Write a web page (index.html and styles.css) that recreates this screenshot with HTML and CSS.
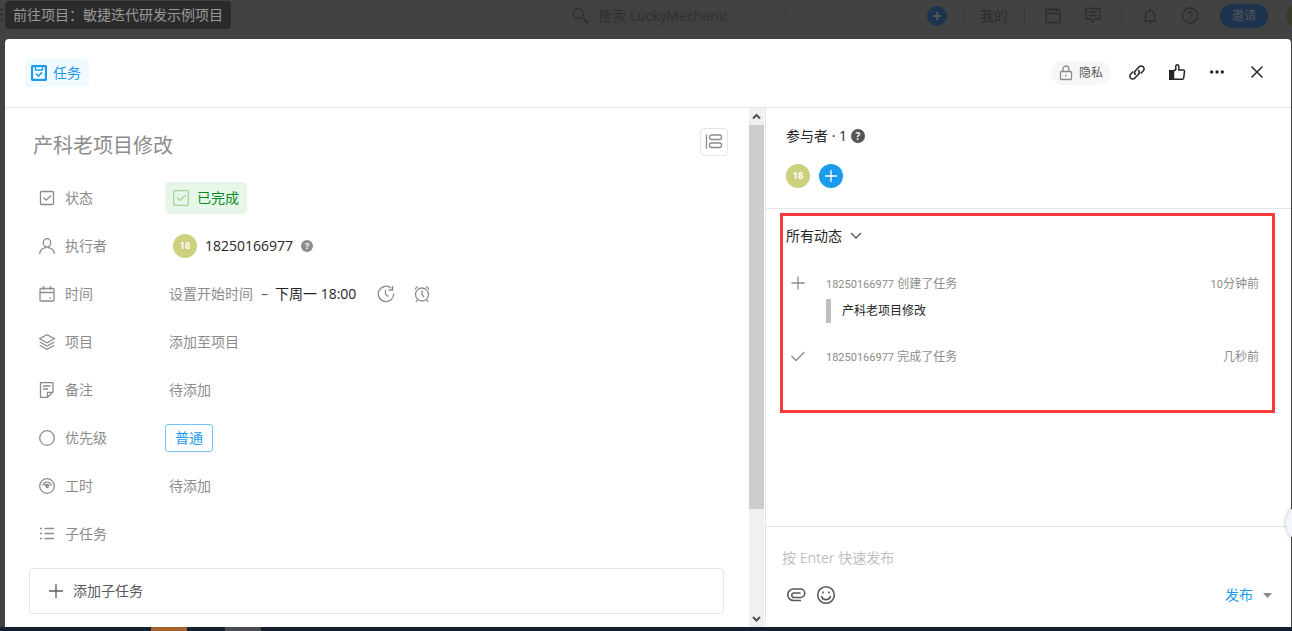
FILE: index.html
```html
<!DOCTYPE html>
<html lang="zh-CN">
    <head>
        <meta charset="utf-8">
        <title>产科老项目修改</title>
        <link rel="stylesheet" href="styles.css">
    </head>
    <body>
        <header class="topbar">
            <div class="topbar-left">
                <svg class="grip" width="3" height="14" viewBox="0 0 3 14"><path d="M0 1.5h3M0 6.5h3M0 11.5h3"/></svg>
                <a href="#" class="project-link">前往项目：敏捷迭代研发示例项目</a>
            </div>
            <div class="search">
                <svg class="icon" width="18" height="18" viewBox="0 0 18 18"><circle cx="6.5" cy="6.5" r="5"/><path d="M10 10l2 2" /><path stroke-width="3" d="M12 12l4 4"/></svg>
                <input type="text" class="search-input" aria-label="搜索" placeholder="搜索 LuckyMechanic">
            </div>
            <nav class="topbar-right">
                <button class="top-add" aria-label="新建"><svg class="icon" width="10" height="10" viewBox="0 0 10 10"><path d="M5 1v8M1 5h8"/></svg></button>
                <span class="top-divider"></span>
                <a href="#" class="top-link">我的</a>
                <span class="top-divider"></span>
                <button class="top-icon" aria-label="日历"><svg class="icon" width="18" height="18" viewBox="0 0 18 18"><rect x="2" y="2.500" width="14" height="13" rx="1"/><path d="M2 6.500h14M5.500 .5v4M12.500 .5v4"/></svg></button>
                <button class="top-icon" aria-label="消息"><svg class="icon" width="18" height="18" viewBox="0 0 18 18"><path d="M2 1.500h14v10.500h-5l-2 3-2-3H2zM5 5h8M5 8.500h8"/></svg></button>
                <span class="top-divider"></span>
                <button class="top-icon" aria-label="通知"><svg class="icon" width="18" height="18" viewBox="0 0 18 18"><path d="M9 .5v2M3 14h12M4.500 13.500V8a4.500 4.500 0 0 1 9 0v5.500M8 16.500h2"/></svg></button>
                <button class="top-icon" aria-label="帮助"><svg class="icon" width="18" height="18" viewBox="0 0 18 18"><circle cx="9" cy="8.500" r="7.500"/><path d="M6.800 6.800a2.200 2.200 0 1 1 3.300 1.900C9.300 9.200 9 9.500 9 10.500M9 11.800v1.300"/></svg></button>
                <button class="invite">邀请</button>
                <span class="top-avatar"></span>
            </nav>
        </header>

        <main class="modal">
            <div class="modal-header">
                <button class="type-chip">
                    <svg width="16" height="16" viewBox="0 0 16 16"><rect x="1" y="1" width="14" height="14" rx="1.500" fill="#fff" stroke="#1b9aee" stroke-width="2.400"/><path d="M4.500 2v3h7V2" fill="none" stroke="#1b9aee" stroke-width="1.300"/><path d="M5 8.500l2.500 2.500L11 7.300" fill="none" stroke="#1b9aee" stroke-width="1.600"/></svg>
                    任务
                </button>
                <div class="modal-actions">
                    <button class="privacy">
                        <svg class="icon" width="14" height="16" viewBox="0 0 14 16"><rect x="1.500" y="6.500" width="11" height="8" rx="1"/><path d="M4 6.500V4a3 3 0 0 1 6 0v2.500M7 9.800v1.600"/></svg>
                        隐私
                    </button>
                    <button class="action" aria-label="复制链接"><svg class="icon" width="18" height="18" viewBox="0 0 18 18"><path d="M7.600 11a3 3 0 0 1-.2-4.200l3.800-4a2.700 2.700 0 0 1 4 0 2.800 2.800 0 0 1 .1 4l-2.500 2.700M10.300 6a3 3 0 0 1 .2 4.200l-3.800 4a2.700 2.700 0 0 1-4 0 2.800 2.800 0 0 1-.1-4L5.100 7.500"/></svg></button>
                    <button class="action" aria-label="点赞"><svg class="icon" width="18" height="18" viewBox="0 0 18 18"><path d="M5.500 7l2.300-1.500V2.300c0-2 3-2 3 0V6h4.500c.8 0 1.200.5 1.200 1.300l-.8 6.700c-.1.700-.6 1.300-1.300 1.300H5.500z"/><path fill="currentColor" stroke="none" d="M1 6h5v10H1z"/></svg></button>
                    <button class="action" aria-label="更多"><svg width="18" height="18" viewBox="0 0 18 18" fill="currentColor"><circle cx="3.700" cy="8" r="1.700"/><circle cx="9" cy="8" r="1.700"/><circle cx="14.300" cy="8" r="1.700"/></svg></button>
                    <button class="action" aria-label="关闭"><svg class="icon" width="18" height="18" viewBox="0 0 18 18"><path d="M3.500 2.500l11 11M14.500 2.500l-11 11"/></svg></button>
                </div>
            </div>

            <div class="modal-body">
                <section class="detail">
                    <div class="title-row">
                        <input type="text" class="title-input" aria-label="标题" value="产科老项目修改">
                        <button class="layout-btn" aria-label="切换布局"><svg class="icon" width="18" height="16" viewBox="0 0 18 16"><path d="M1.500 .5v14"/><rect x="4.500" y="1" width="12" height="4.500" rx="2"/><rect x="4.500" y="9" width="12" height="4.500" rx="2"/></svg></button>
                    </div>

                    <div class="field">
                        <span class="field-label"><svg class="icon" width="16" height="16" viewBox="0 0 16 16"><rect x="1.500" y="1.500" width="13" height="13" rx="1"/><path d="M4.500 7.500l2.700 2.700L12 5.500"/></svg>状态</span>
                        <button class="status">
                            <svg class="icon" width="16" height="16" viewBox="0 0 16 16"><rect x=".7" y=".7" width="14.600" height="14.600" rx="1"/><path d="M4 7.500l3 3L12.500 5"/></svg>
                            已完成
                        </button>
                    </div>
                    <div class="field">
                        <span class="field-label"><svg class="icon" width="16" height="16" viewBox="0 0 16 16"><ellipse cx="8" cy="4.800" rx="3.700" ry="4.200"/><path d="M6.500 8.500v1.200C3 10.500.8 12 .7 16M9.500 8.500v1.200c3.500.8 5.700 2.300 5.800 6.300"/></svg>执行者</span>
                        <button class="executor"><span class="avatar">18</span>18250166977</button>
                        <span class="help help-small">?</span>
                    </div>
                    <div class="field">
                        <span class="field-label"><svg class="icon" width="16" height="16" viewBox="0 0 16 16"><rect x="1" y="2.500" width="14" height="12.500" rx="1"/><path d="M1 6.500h14M4.500 0v4M11.500 0v4M10.500 12h1.500"/></svg>时间</span>
                        <button class="text-value">设置开始时间</button>
                        <span class="dash">–</span>
                        <button class="text-value due">下周一 18:00</button>
                        <button class="time-icon" aria-label="重复"><svg class="icon" width="18" height="18" viewBox="0 0 18 18"><path d="M16.700 8.500A7.700 7.700 0 1 1 14.300 3.300M15.700 1v4h-4M8.500 5v4.500l3 2"/></svg></button>
                        <button class="time-icon" aria-label="提醒"><svg class="icon" width="18" height="18" viewBox="0 0 18 18"><circle cx="9" cy="9.500" r="6.500"/><path d="M9 5.500v4l2 2.500M2 4.500A6 6 0 0 1 5 1.500M16 4.500a6 6 0 0 0-3-3M4.500 14.500L3 17M13.500 14.500L15 17"/></svg></button>
                    </div>
                    <div class="field">
                        <span class="field-label"><svg class="icon" width="16" height="16" viewBox="0 0 16 16"><path d="M8 .7l7.300 4L8 8.700.7 4.700zM.7 8L8 12l7.300-4M.7 11.300l7.300 4 7.300-4"/></svg>项目</span>
                        <button class="text-value">添加至项目</button>
                    </div>
                    <div class="field">
                        <span class="field-label"><svg class="icon" width="16" height="16" viewBox="0 0 16 16"><path d="M8.500 15.300H1.500V.7h12.500V10l-5.500 5.300v-5H14M4 4h7.500M4 7h5"/></svg>备注</span>
                        <button class="text-value">待添加</button>
                    </div>
                    <div class="field">
                        <span class="field-label"><svg class="icon" width="16" height="16" viewBox="0 0 16 16"><circle cx="8" cy="8" r="7.300"/></svg>优先级</span>
                        <button class="priority">普通</button>
                    </div>
                    <div class="field">
                        <span class="field-label"><svg class="icon" width="16" height="16" viewBox="0 0 16 16"><circle cx="8" cy="8" r="7.300"/><path d="M3.500 7.500a4.700 4.700 0 0 1 9 0M5.800 8a2.500 2.500 0 0 1 4.600 0M5.500 6l2.700 3"/><circle cx="8.200" cy="8.700" r="1"/></svg>工时</span>
                        <button class="text-value">待添加</button>
                    </div>
                    <div class="field">
                        <span class="field-label"><svg class="icon" width="16" height="16" viewBox="0 0 16 16"><path d="M1 2.500h2M1 7.500h2M1 12.500h2M5.500 2.500H15M5.500 7.500H15M5.500 12.500H15"/></svg>子任务</span>
                    </div>

                    <button class="add-subtask">
                        <svg class="icon" width="14" height="14" viewBox="0 0 14 14"><path d="M7 0v14M0 7h14"/></svg>
                        添加子任务
                    </button>
                </section>

                <div class="scrollbar">
                    <svg class="scroll-arrow" width="15" height="17" viewBox="0 0 15 17"><path d="M4 10.500L7.500 7l3.500 3.500"/></svg>
                    <div class="scroll-thumb"></div>
                    <svg class="scroll-arrow" width="15" height="17" viewBox="0 0 15 17"><path d="M4 7l3.500 3.500L11 7"/></svg>
                </div>

                <aside class="side">
                    <section class="members">
                        <h2 class="side-title">参与者 · 1 <span class="help">?</span></h2>
                        <div class="member-list">
                            <span class="avatar">18</span>
                            <button class="member-add" aria-label="添加参与者"><svg class="icon" width="12" height="12" viewBox="0 0 12 12"><path d="M6 0v12M0 6h12"/></svg></button>
                        </div>
                    </section>

                    <section class="activity">
                        <div class="activity-filter">
                            <select class="filter-select" aria-label="动态筛选">
                                <option>所有动态</option>
                            </select>
                            <svg class="icon" width="12" height="8" viewBox="0 0 12 8"><path d="M1 1l5 5 5-5"/></svg>
                        </div>
                        <div class="activity-item">
                            <svg class="icon" width="14" height="14" viewBox="0 0 14 14"><path d="M7 .5v13M.5 7h13"/></svg>
                            <div class="activity-text">
                                <p><span class="user">18250166977</span> 创建了任务</p>
                                <blockquote>产科老项目修改</blockquote>
                            </div>
                            <time><span class="user">10</span>分钟前</time>
                        </div>
                        <div class="activity-item">
                            <svg class="icon" width="14" height="14" viewBox="0 0 14 14"><path d="M.5 7l4.500 4.500L13.500 3"/></svg>
                            <div class="activity-text">
                                <p><span class="user">18250166977</span> 完成了任务</p>
                            </div>
                            <time>几秒前</time>
                        </div>
                    </section>

                    <form class="comment">
                        <textarea class="comment-input" rows="1" aria-label="评论" placeholder="按 Enter 快速发布"></textarea>
                        <div class="comment-tools">
                            <button type="button" class="tool" aria-label="附件"><svg class="icon" width="20" height="20" viewBox="0 0 20 20"><path d="M15 15.500H7.500a5.500 5.500 0 0 1 0-11.500h7a4 4 0 0 1 0 8.500H8a1.700 1.700 0 0 1 0-4.500h6.500"/></svg></button>
                            <button type="button" class="tool" aria-label="表情"><svg class="icon" width="20" height="20" viewBox="0 0 20 20"><circle cx="10" cy="10" r="8.300"/><path d="M5.500 11a4.600 4.600 0 0 0 9 0M7 6.500v2M13 6.500v2"/></svg></button>
                            <button type="submit" class="send">发布</button>
                            <button type="button" class="send-more" aria-label="更多发布选项"><svg width="9" height="5" viewBox="0 0 9 5"><path fill="#888" d="M0 0h9L4.500 5z"/></svg></button>
                        </div>
                    </form>
                </aside>
            </div>
        </main>

        <footer class="taskbar"><span class="task-active"></span><span class="task-open"></span></footer>
        <div class="float-ball"></div>
    </body>
</html>
```
FILE: styles.css
```css
* {
box-sizing: border-box;
}
body {
margin: 0;
height: 100vh;
display: flex;
flex-direction: column;
overflow: hidden;
background-color: #424242;
color: #262626;
font-family: "Open Sans", "Noto Sans CJK SC", sans-serif;
font-size: 14px;
line-height: 20px;
}
button,
input,
select,
textarea {
font: inherit;
color: inherit;
background: none;
border: 0;
padding: 0;
margin: 0;
outline: none;
}
button {
cursor: pointer;
display: flex;
align-items: center;
justify-content: center;
}
a {
color: inherit;
text-decoration: none;
}
svg {
display: block;
flex: none;
}
.icon {
fill: none;
stroke: currentColor;
stroke-width: 1.3;
}

/* top bar */
.topbar {
flex: 0 0 39px;
display: grid;
grid-template-columns: 1fr 280px 1fr;
align-items: start;
overflow: hidden;
color: #2d2d2d;
}
.topbar-left {
display: flex;
align-items: center;
gap: 2px;
padding-top: 1px;
}
.grip {
stroke: #303030;
stroke-width: 2;
}
.project-link {
padding: 4px 8px;
border-radius: 4px;
background-color: #2b2b2b;
color: #999;
white-space: nowrap;
}
.search {
display: flex;
align-items: center;
gap: 8px;
height: 31px;
padding-left: 66px;
border-radius: 16px;
background-color: #414141;
color: #303030;
}
.search-input {
flex: 1;
min-width: 0;
}
.search-input::placeholder {
color: #303030;
}
.topbar-right {
display: flex;
justify-content: flex-end;
align-items: center;
height: 31px;
}
.topbar-right > * {
flex: none;
}
.top-add {
width: 20px;
height: 20px;
margin-right: 8px;
border-radius: 50%;
background-color: #1d3450;
color: #555;
}
.top-add .icon {
stroke-width: 2;
}
.top-divider {
width: 1px;
height: 16px;
margin: 0 8px;
background-color: #393939;
}
.top-link {
padding: 0 8px;
}
.top-icon {
width: 40px;
height: 24px;
}
.invite {
width: 48px;
height: 24px;
margin-left: 10px;
border-radius: 12px;
background-color: #1d3450;
color: #555;
font-size: 12px;
}
.top-avatar {
width: 24px;
height: 24px;
margin: 0 -18px 0 18px;
border-radius: 50%;
background-color: #3a3d25;
}

/* task window */
.modal {
flex: 1;
min-height: 0;
display: flex;
flex-direction: column;
margin: 0 1px 0 5px;
border-radius: 4px 4px 0 0;
background-color: #fff;
}
.modal-header {
flex: none;
display: flex;
justify-content: space-between;
align-items: center;
padding: 20px 14px 20px 20px;
border-bottom: 1px solid #e5e5e5;
}
.type-chip {
height: 28px;
gap: 6px;
padding: 0 8px 0 6px;
border-radius: 4px;
background-color: #f0faff;
color: #1b9aee;
}
.modal-actions {
display: flex;
align-items: center;
}
.privacy {
height: 24px;
gap: 6px;
margin-right: 6px;
padding: 0 8px;
border-radius: 12px;
background-color: #f7f7f7;
color: #595959;
font-size: 12px;
}
.privacy .icon {
color: #8c8c8c;
}
.action {
width: 40px;
height: 28px;
}
.action .icon {
stroke-width: 1.5;
}
.modal-body {
flex: 1;
min-height: 0;
display: flex;
}

/* left pane */
.detail {
flex: 1;
min-width: 0;
padding: 20px 21px 0 24px;
overflow: hidden;
color: #8c8c8c;
}
.title-row {
display: flex;
align-items: flex-start;
gap: 12px;
margin-bottom: 14px;
}
.title-input {
flex: 1;
min-width: 0;
height: 32px;
padding-left: 4px;
font-size: 20px;
}
.layout-btn {
width: 28px;
height: 28px;
border: 1px solid #e5e5e5;
border-radius: 4px;
}
.field {
display: flex;
align-items: center;
height: 48px;
padding-left: 10px;
}
.field-label {
flex: 0 0 126px;
display: flex;
align-items: center;
gap: 10px;
}
.text-value {
padding: 0 4px;
}
.status {
height: 32px;
gap: 8px;
padding: 0 8px;
border-radius: 4px;
background-color: #e6f7e9;
color: #0a8a27;
}
.status .icon {
color: #a5d498;
}
.executor {
gap: 8px;
padding: 0 8px;
color: #262626;
}
.avatar {
flex: none;
width: 24px;
height: 24px;
border-radius: 50%;
background-color: #cdd07d;
color: #fff;
font-family: Roboto, sans-serif;
font-size: 9px;
font-weight: bold;
line-height: 24px;
text-align: center;
}
.help {
display: inline-block;
width: 14px;
height: 14px;
border-radius: 50%;
background-color: #555;
color: #fff;
font-size: 10px;
font-weight: bold;
line-height: 14px;
text-align: center;
}
.help-small {
width: 12px;
height: 12px;
background-color: #8c8c8c;
font-size: 9px;
line-height: 12px;
}
.dash {
padding: 0 3px 0 4px;
color: #595959;
}
.due {
margin-right: 8px;
color: #262626;
}
.time-icon {
width: 36px;
height: 24px;
}
.priority {
height: 28px;
padding: 0 9px;
border: 1px solid #75c5fa;
border-radius: 3px;
color: #1b9aee;
}
.add-subtask {
width: calc(100% - 4px);
height: 46px;
justify-content: flex-start;
gap: 10px;
margin-top: 10px;
padding: 0 19px;
border: 1px solid #e5e5e5;
border-radius: 4px;
color: #595959;
}
.scrollbar {
flex: 0 0 15px;
display: flex;
flex-direction: column;
margin-right: 1px;
background-color: #f0f0f0;
}
.scroll-arrow {
fill: none;
stroke: #505050;
stroke-width: 2;
}
.scroll-thumb {
height: 74%;
margin-bottom: auto;
background-color: #cdcdcd;
}

/* right pane */
.side {
flex: 0 0 526px;
display: flex;
flex-direction: column;
border-left: 1px solid #e5e5e5;
}
.members {
padding: 18px 20px 20px;
border-bottom: 1px solid #e5e5e5;
}
.side-title {
display: flex;
align-items: center;
gap: 4px;
margin: 0 0 18px;
font-size: 14px;
font-weight: normal;
}
.member-list {
display: flex;
align-items: center;
gap: 9px;
}
.member-add {
width: 24px;
height: 24px;
border-radius: 50%;
background-color: #1b9aee;
color: #fff;
}
.activity {
height: 200px;
margin: 4px 16px 0 14px;
padding: 10px 13px 0 3px;
border: 3px solid #f93a3a;
}
.activity-filter {
display: flex;
align-items: center;
gap: 8px;
margin-bottom: 28px;
}
.activity-filter .icon {
color: #595959;
}
.filter-select {
appearance: none;
cursor: pointer;
}
.activity-item {
display: flex;
gap: 21px;
margin-bottom: 24px;
padding-left: 5px;
color: #8c8c8c;
font-size: 12px;
}
.activity-item .icon {
margin-top: 2px;
}
.activity-text {
flex: 1;
}
.activity-text p {
margin: 0;
}
.activity-text blockquote {
margin: 4px 0 0;
padding: 2px 0 2px 11px;
border-left: 5px solid #bfbfbf;
color: #262626;
}
.user {
font-family: Roboto, sans-serif;
font-size: 11px;
}
.comment {
margin-top: auto;
padding: 19px 19px 18px 16px;
border-top: 1px solid #e5e5e5;
}
.comment-input {
display: block;
width: 100%;
height: 24px;
resize: none;
overflow: hidden;
line-height: 24px;
}
.comment-input::placeholder {
color: #bfbfbf;
}
.comment-tools {
display: flex;
align-items: center;
gap: 10px;
padding: 11px 0 0 4px;
color: #595959;
}
.tool {
width: 20px;
height: 28px;
}
.tool .icon {
stroke-width: 1.6;
}
.send {
margin-left: auto;
color: #1b9aee;
}

/* desktop edge */
.taskbar {
flex: 0 0 4px;
display: flex;
padding-left: 151px;
background-color: #14202f;
}
.task-active {
width: 36px;
background-color: #a5622b;
}
.task-open {
width: 36px;
margin-left: 38px;
background-color: #484b51;
}
.float-ball {
position: fixed;
top: 503px;
right: -34px;
width: 40px;
height: 40px;
border-radius: 50%;
background-color: #f3f6ff;
box-shadow: 0 0 4px rgba(0, 0, 0, 0.3);
}
```
